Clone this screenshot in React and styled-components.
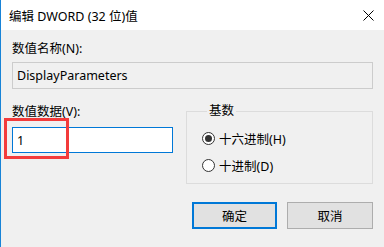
import React, { useState } from 'react';
import styled, { createGlobalStyle } from 'styled-components';

const GlobalStyle = createGlobalStyle`
  html, body {
    margin: 0;
    padding: 0;
    background: #f0f0f0;
  }
  body {
    font-family: 'Noto Sans', 'Noto Sans CJK SC', sans-serif;
    font-size: 12px;
    color: #000;
  }
`;

const Window = styled.div`
  width: 384px;
  height: 247px;
  box-sizing: border-box;
  border-left: 1px solid #1883d7;
  background: #f0f0f0;
  display: flex;
  flex-direction: column;
  position: relative;
  overflow: hidden;
`;

const TitleBar = styled.div`
  height: 30px;
  background: #fff;
  display: flex;
  align-items: center;
  justify-content: space-between;
  padding: 0 8px 0 8px;
  font-size: 12.5px;
`;

const CloseIcon = styled.svg`
  width: 11px;
  height: 11px;
  margin-right: 2px;
`;

const Body = styled.div`
  flex: 1;
  padding: 11px 11px 0 11px;
  display: flex;
  flex-direction: column;
`;

const Label = styled.div`
  height: 16px;
  line-height: 16px;
  font-size: 12.5px;
`;

const TextBox = styled.div`
  margin-top: ${(p) => p.$top || 5}px;
  height: ${(p) => p.$height || 27}px;
  box-sizing: border-box;
  border: 1px solid ${(p) => (p.$focused ? '#0078d7' : '#cccccc')};
  background: ${(p) => (p.$focused ? '#fff' : '#f0f0f0')};
  display: flex;
  align-items: center;
  padding-left: 4px;
  font-size: 12.5px;
`;

const Row = styled.div`
  display: flex;
  margin-top: 15px;
  gap: 13px;
`;

const Column = styled.div`
  width: 161px;
`;

const Group = styled.fieldset`
  flex: 1;
  margin: 0;
  height: 80px;
  padding: 12px 0 0 15px;
  border: 1px solid #dcdcdc;
  box-sizing: border-box;
  display: flex;
  flex-direction: column;
  gap: 11px;
`;

const Legend = styled.legend`
  font-size: 12.5px;
  padding: 0 2px;
  margin-left: 5px;
  line-height: 14px;
`;

const RadioRow = styled.div`
  display: flex;
  align-items: center;
  height: 16px;
  font-size: 12.5px;
  cursor: pointer;
`;

const RadioCircle = styled.span`
  width: 13px;
  height: 13px;
  box-sizing: border-box;
  border-radius: 50%;
  border: 1px solid #333;
  background: #fff;
  display: flex;
  align-items: center;
  justify-content: center;
  margin-right: 4px;

  &::after {
    content: '';
    width: 7px;
    height: 7px;
    border-radius: 50%;
    background: ${(p) => (p.$checked ? '#333' : 'transparent')};
  }
`;

const ButtonRow = styled.div`
  display: flex;
  justify-content: flex-end;
  gap: 10px;
  margin-top: 18px;
`;

const Button = styled.button`
  width: ${(p) => (p.$primary ? 85 : 86)}px;
  height: 27px;
  box-sizing: border-box;
  background: #e1e1e1;
  border: ${(p) => (p.$primary ? '2px solid #0078d7' : '1px solid #adadad')};
  font-family: inherit;
  font-size: 12.5px;
  color: #000;
  padding: 0;
`;

const Highlight = styled.div`
  position: absolute;
  left: 3px;
  top: 118px;
  width: 65px;
  height: 41px;
  box-sizing: border-box;
  border: 3px solid #f33b3b;
  pointer-events: none;
`;

export default function App() {
  const [hex, setHex] = useState(true);

  return (
    <Window>
      <GlobalStyle />
      <TitleBar>
        <span>编辑 DWORD (32 位)值</span>
        <CloseIcon viewBox="0 0 11 11">
          <path d="M0.5 0.5 L10.5 10.5 M10.5 0.5 L0.5 10.5" stroke="#000" strokeWidth="1" />
        </CloseIcon>
      </TitleBar>
      <Body>
        <Label>数值名称(N):</Label>
        <TextBox $top={5}>DisplayParameters</TextBox>
        <Row>
          <Column>
            <Label>数值数据(V):</Label>
            <TextBox $focused $top={7} $height={26}>1</TextBox>
          </Column>
          <Group>
            <Legend>基数</Legend>
            <RadioRow onClick={() => setHex(true)}>
              <RadioCircle $checked={hex} />
              十六进制(H)
            </RadioRow>
            <RadioRow onClick={() => setHex(false)}>
              <RadioCircle $checked={!hex} />
              十进制(D)
            </RadioRow>
          </Group>
        </Row>
        <ButtonRow>
          <Button $primary>确定</Button>
          <Button>取消</Button>
        </ButtonRow>
      </Body>
      <Highlight />
    </Window>
  );
}
